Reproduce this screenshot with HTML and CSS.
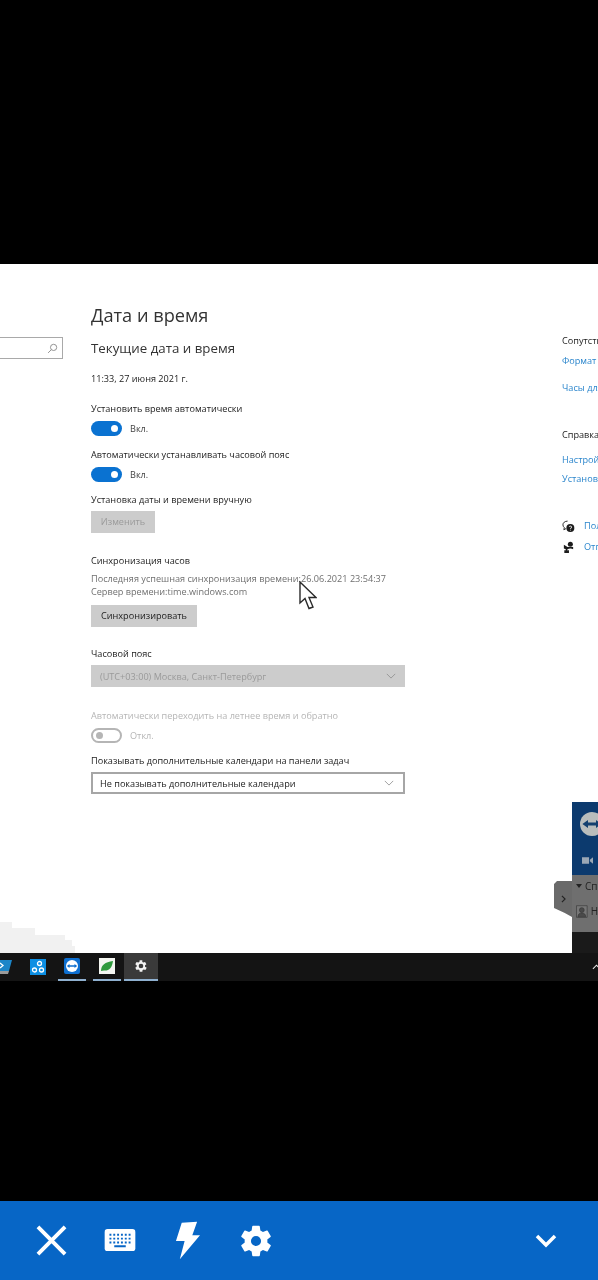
FILE: index.html
```html
<!DOCTYPE html>
<html lang="ru">
<head>
    <meta charset="UTF-8">
    <meta name="viewport" content="width=device-width, initial-scale=1.0">
    <title>Удалённый рабочий стол</title>
    <link rel="stylesheet" href="styles.css">
</head>
<body>
    <div class="remote">
        <div class="window">
            <div class="sidebar">
                <div class="search">
                    <svg class="search-icon" viewBox="0 0 12 12"><circle cx="7.2" cy="4.8" r="3.4"/><path d="M4.8 7.2 1.2 10.8"/></svg>
                </div>
                <svg class="smudge" viewBox="0 0 75 31"><path d="M0 0h12v6h23v7h30v5h7v6h3v7H0z"/></svg>
            </div>

            <div class="settings">
                <h1>Дата и время</h1>
                <h2>Текущие дата и время</h2>
                <p class="now">11:33, 27 июня 2021 г.</p>

                <p class="label first">Установить время автоматически</p>
                <div class="toggle-row">
                    <span class="toggle on"></span>
                    <span class="toggle-text">Вкл.</span>
                </div>

                <p class="label second">Автоматически устанавливать часовой пояс</p>
                <div class="toggle-row">
                    <span class="toggle on"></span>
                    <span class="toggle-text">Вкл.</span>
                </div>

                <p class="label third">Установка даты и времени вручную</p>
                <div class="btn disabled">Изменить</div>

                <p class="label sync">Синхронизация часов</p>
                <p class="info sync-last">Последняя успешная синхронизация времени:26.06.2021 23:54:37</p>
                <p class="info">Сервер времени:time.windows.com</p>
                <div class="btn sync-btn">Синхронизировать</div>

                <p class="label zone">Часовой пояс</p>
                <div class="select disabled">
                    <span>(UTC+03:00) Москва, Санкт-Петербург</span>
                    <svg class="chevron" viewBox="0 0 12 7"><path d="M1 1l5 5 5-5"/></svg>
                </div>

                <p class="label muted dst">Автоматически переходить на летнее время и обратно</p>
                <div class="toggle-row off-row">
                    <span class="toggle off"></span>
                    <span class="toggle-text">Откл.</span>
                </div>

                <p class="label calendars">Показывать дополнительные календари на панели задач</p>
                <div class="select">
                    <span>Не показывать дополнительные календари</span>
                    <svg class="chevron" viewBox="0 0 12 7"><path d="M1 1l5 5 5-5"/></svg>
                </div>
            </div>

            <div class="related">
                <p class="rel-title">Сопутствующие параметры</p>
                <a class="rel-link">Формат даты, времени и региона</a>
                <a class="rel-link gap">Часы для различных часовых поясов</a>
                <p class="rel-title help">Справка из Интернета</p>
                <a class="rel-link">Настройка синхронизации часов</a>
                <a class="rel-link tight">Установка часового пояса</a>
                <div class="rel-action first-action">
                    <svg viewBox="0 0 14 14"><path class="bubble" d="M6 1.2C3 1.2 1 3 1 5.2c0 1.200.6 2.200 1.500 3L2 10.500l2.400-1.300"/><circle cx="9" cy="8.500" r="4.300"/><path class="mark" d="M7.700 7.400c.3-1.200 2.700-1.100 2.700.2 0 1-1.300 1-1.300 2M9.100 10.500v.8"/></svg>
                    <a>Получить помощь</a>
                </div>
                <div class="rel-action">
                    <svg viewBox="0 0 14 14"><circle cx="9" cy="3.500" r="2.700"/><path d="M4.500 12.500c0-3 2-4.500 4.500-4.500s3 1 3 1V6.500H6L2 4v4l2 1zM2.500 13h5V10h-5z"/></svg>
                    <a>Отправить отзыв</a>
                </div>
            </div>

            <!-- окно TeamViewer поверх настроек -->
            <div class="tv-panel">
                <div class="tv-head">
                    <span class="tv-logo"><svg viewBox="0 0 30 30"><path d="M3 15l7-5v3h10v-3l7 5-7 5v-3H10v3z"/></svg></span>
                    <svg class="tv-camera" viewBox="0 0 14 10"><path d="M0 1h9v8H0zM10 4l4-3v8l-4-3z"/></svg>
                </div>
                <div class="tv-list">
                    <p class="tv-row"><i class="tv-arrow"></i>Сп</p>
                    <p class="tv-row contact"><svg class="tv-user" viewBox="0 0 12 13"><path d="M.5.5h11v12H.5z"/><circle cx="6" cy="5" r="2.500"/><path d="M2 12c0-3 2-4 4-4s4 1 4 4z"/></svg>Н</p>
                </div>
                <div class="tv-foot"></div>
            </div>
            <div class="tv-tab">
                <svg viewBox="0 0 6 10"><path d="M1 1l4 4-4 4"/></svg>
            </div>

            <!-- указатель мыши -->
            <svg class="pointer" viewBox="0 0 18 30"><path d="M1 1v21l5-4.500 4 10 4-1.500-4-9.500h7z"/></svg>
        </div>

        <div class="taskbar">
            <span class="task-icon cut"><svg viewBox="0 0 16 16"><path fill="#1c86c8" d="M0 1h16l-3 11H0z"/><path fill="#9a9a9a" d="M0 12h13l-1 3H0z"/><path fill="none" stroke="#fff" stroke-width="1.300" d="M4 4l3 2.500-3 2.500"/></svg></span>
            <span class="task-icon"><svg viewBox="0 0 16 16"><rect width="16" height="16" fill="#0d8fe3"/><g fill="none" stroke="#fff" stroke-width="1.300"><circle cx="9.500" cy="4.500" r="2"/><circle cx="4.500" cy="11" r="2"/><circle cx="11.500" cy="11" r="2"/></g></svg></span>
            <span class="task-icon open"><svg viewBox="0 0 16 16"><rect width="16" height="16" rx="2" fill="#0e6fd0"/><circle cx="8" cy="8" r="6" fill="#fff"/><path fill="#0e6fd0" d="M2.800 8l2.700-2v1.200h5V6l2.700 2-2.700 2V8.800h-5V10z"/></svg></span>
            <span class="task-icon open"><svg viewBox="0 0 16 16"><rect width="16" height="16" fill="#f4f6f1"/><path fill="#2f9a3d" d="M2 13c0-6 4-9 12-10-1 7-4 10-9 9.500z"/></svg></span>
            <span class="task-icon open active"><svg viewBox="0 0 24 24"><path fill="#f2f2f2" d="M19.400 13c0-.3.1-.6.1-1s0-.7-.1-1l2.100-1.600-2-3.500-2.500 1a7 7 0 0 0-1.700-1L15.400 3.300h-4l-.4 2.600a7 7 0 0 0-1.700 1l-2.500-1-2 3.500L6.900 11a7 7 0 0 0 0 2l-2.100 1.600 2 3.500 2.500-1a7 7 0 0 0 1.700 1l.4 2.600h4l.4-2.600a7 7 0 0 0 1.700-1l2.500 1 2-3.500zM13.400 15.500a3.500 3.500 0 1 1 0-7 3.500 3.500 0 0 1 0 7z" transform="translate(-1.400)"/></svg></span>
            <svg class="tray-arrow" viewBox="0 0 10 6"><path d="M1 5l4-4 4 4"/></svg>
        </div>
    </div>

    <div class="toolbar">
        <button class="tool close-tool"><svg viewBox="0 0 32 32"><path d="M2 2l28 28M30 2 2 30"/></svg></button>
        <button class="tool keyboard-tool"><svg viewBox="0 0 32 24"><rect width="32" height="23" rx="3" fill="#fff"/><path fill="#0766c6" d="M5 5h2v2H5zm4 0h2v2H9zm4 0h2v2h-2zm4 0h2v2h-2zm4 0h2v2h-2zm4 0h2v2h-2zM5 9h2v2H5zm4 0h2v2H9zm4 0h2v2h-2zm4 0h2v2h-2zm4 0h2v2h-2zm4 0h2v2h-2zM5 13h2v2H5zm4 0h2v2H9zm4 0h2v2h-2zm4 0h2v2h-2zm4 0h2v2h-2zm4 0h2v2h-2zM10 17h12v2H10z"/></svg></button>
        <button class="tool bolt-tool"><svg viewBox="0 0 26 39"><path fill="#fff" d="M7 1l16-1-5 14h8L5 39l5-19H1z"/></svg></button>
        <button class="tool gear-tool"><svg viewBox="0 0 24 24"><path fill="#fff" d="M19.140 12.940c.04-.3.060-.61.060-.94s-.02-.64-.07-.94l2.030-1.580a.5.500 0 0 0 .12-.61l-1.920-3.320a.5.500 0 0 0-.59-.22l-2.390.96a7 7 0 0 0-1.620-.94l-.36-2.540a.48.480 0 0 0-.48-.41h-3.840a.48.480 0 0 0-.47.41l-.36 2.540c-.59.24-1.130.57-1.620.94l-2.390-.96a.49.490 0 0 0-.59.22L2.740 8.870a.48.480 0 0 0 .12.61l2.030 1.580a7.500 7.500 0 0 0 0 1.880l-2.030 1.580a.5.500 0 0 0-.12.61l1.920 3.320c.12.22.37.29.59.22l2.390-.96c.5.380 1.030.7 1.620.94l.36 2.540c.05.240.24.410.48.410h3.840c.24 0 .44-.17.47-.41l.36-2.540a7 7 0 0 0 1.620-.94l2.390.96c.22.080.47 0 .59-.22l1.920-3.320a.48.480 0 0 0-.12-.61zM12 15.200a3.200 3.200 0 1 1 0-6.400 3.200 3.200 0 0 1 0 6.400z"/></svg></button>
        <button class="tool collapse-tool"><svg viewBox="0 0 22 14"><path d="M2 2l9 9 9-9"/></svg></button>
    </div>
</body>
</html>
```

FILE: styles.css
```css
* {
    margin: 0;
    padding: 0;
    box-sizing: border-box;
}

body {
    width: 598px;
    height: 1280px;
    background: #000;
    font-family: 'Open Sans', 'Noto Sans', sans-serif;
    overflow: hidden;
    display: flex;
    flex-direction: column;
}

/* Remote desktop picture */
.remote {
    margin-top: 264px;
    height: 717px;
    filter: blur(0.45px);
}

.window {
    position: relative;
    height: 689px;
    background: #fff;
    display: flex;
    overflow: hidden;
}

.sidebar {
    width: 91px;
    flex-shrink: 0;
    padding-top: 73px;
}

.search {
    width: 63px;
    height: 22px;
    border: 1px solid #a9a9a9;
    border-left: none;
    display: flex;
    justify-content: flex-end;
    align-items: center;
    padding-right: 4px;
}

.search-icon {
    width: 11px;
    height: 11px;
    fill: none;
    stroke: #8a8a8a;
    stroke-width: 1;
}

.smudge {
    position: absolute;
    left: 0;
    bottom: 0;
    width: 75px;
    height: 31px;
    fill: #f1f1f1;
}

.settings {
    width: 314px;
    flex-shrink: 0;
    color: #222;
}

h1 {
    font-size: 18.2px;
    font-weight: 400;
    line-height: 24px;
    margin-top: 39px;
    color: #333;
}

h2 {
    font-size: 13.3px;
    font-weight: 400;
    line-height: 18px;
    margin-top: 12px;
    color: #333;
}

.now {
    font-size: 9.15px;
    line-height: 14px;
    margin-top: 15px;
}

.label {
    font-size: 9.15px;
    line-height: 14px;
}

.label.first { margin-top: 16px; }
.label.second { margin-top: 12px; }
.label.third { margin-top: 11px; }
.label.sync { margin-top: 21px; }
.label.zone { margin-top: 20px; }
.label.dst { margin-top: 22px; }
.label.calendars { margin-top: 11px; }

.label.muted {
    color: #b5b5b5;
}

.toggle-row {
    display: flex;
    align-items: center;
    gap: 8px;
    height: 16px;
    margin-top: 4px;
}

.toggle {
    position: relative;
    width: 31px;
    height: 15px;
    border-radius: 8px;
    display: block;
}

.toggle::after {
    content: '';
    position: absolute;
    top: 4px;
    width: 7px;
    height: 7px;
    border-radius: 50%;
}

.toggle.on {
    background: #0a72d1;
}

.toggle.on::after {
    right: 4px;
    background: #fff;
}

.toggle.off {
    border: 2px solid #b5b5b5;
}

.toggle.off::after {
    top: 2px;
    left: 3px;
    background: #b5b5b5;
}

.toggle-text {
    font-size: 9.15px;
    color: #444;
}

.off-row .toggle-text {
    color: #b5b5b5;
}

.btn {
    width: 64px;
    height: 22px;
    margin-top: 4px;
    background: #cccccc;
    font-size: 9.15px;
    line-height: 22px;
    text-align: center;
    color: #222;
}

.btn.disabled {
    color: #9a9a9a;
}

.btn.sync-btn {
    width: 106px;
    margin-top: 7px;
}

.info {
    font-size: 9.15px;
    line-height: 13px;
    color: #6f6f6f;
}

.info.sync-last {
    margin-top: 4px;
}

.select {
    width: 314px;
    height: 22px;
    margin-top: 4px;
    padding: 0 9px 0 7px;
    display: flex;
    align-items: center;
    justify-content: space-between;
    font-size: 9.15px;
    color: #222;
    border: 2px solid #a6a6a6;
}

.select.disabled {
    padding: 0 9px;
    background: #cccccc;
    border: none;
    color: #9a9a9a;
}

.chevron {
    width: 10px;
    height: 6px;
    fill: none;
    stroke: #8f8f8f;
    stroke-width: 1;
}

/* Right column, cut off by the screen edge */
.related {
    margin-left: 157px;
    width: 36px;
    flex-shrink: 0;
    font-size: 9.15px;
    white-space: nowrap;
    color: #222;
    padding-top: 70px;
}

.related p,
.related a {
    display: block;
    line-height: 14px;
}

.rel-link {
    color: #2a85cc;
    margin-top: 6px;
}

.rel-link.gap { margin-top: 13px; }
.rel-link.tight { margin-top: 5px; }

.rel-title.help { margin-top: 33px; }
.rel-title.help + .rel-link { margin-top: 11px; }

.rel-action {
    display: flex;
    align-items: center;
    gap: 9px;
    height: 14px;
    margin-top: 7px;
    color: #2a85cc;
}

.rel-action.first-action { margin-top: 33px; }

.rel-action svg {
    width: 13px;
    height: 13px;
    flex-shrink: 0;
    fill: #1c1c1c;
}

.rel-action .bubble {
    fill: none;
    stroke: #1c1c1c;
    stroke-width: 1;
}

.rel-action .mark {
    fill: none;
    stroke: #fff;
    stroke-width: 1;
}

/* TeamViewer panel */
.tv-panel {
    position: absolute;
    left: 572px;
    top: 538px;
    width: 26px;
    height: 151px;
    display: flex;
    flex-direction: column;
    overflow: hidden;
}

.tv-head {
    height: 73px;
    background: #0c3a6e;
    padding: 10px 0 0 8px;
}

.tv-logo {
    display: block;
    width: 24px;
    height: 24px;
    border-radius: 50%;
    background: #b9bdbc;
}

.tv-logo svg {
    display: block;
    fill: #14406f;
}

.tv-camera {
    display: block;
    width: 11px;
    height: 9px;
    margin: 20px 0 0 2px;
    fill: #9aa7b5;
}

.tv-list {
    height: 57px;
    background: #6f6f6f;
    color: #222;
    font-size: 10px;
    padding: 3px 0 0 4px;
}

.tv-row {
    line-height: 16px;
    white-space: nowrap;
    display: flex;
    align-items: center;
    gap: 3px;
}

.tv-row.contact {
    margin-top: 9px;
}

.tv-arrow {
    width: 0;
    height: 0;
    border-left: 3px solid transparent;
    border-right: 3px solid transparent;
    border-top: 4px solid #222;
}

.tv-user {
    width: 12px;
    height: 13px;
    fill: #4a4a4a;
    stroke: #333;
    stroke-width: 0.6;
}

.tv-user path:first-child {
    fill: #777;
}

.tv-foot {
    flex: 1;
    background: #1a1a1a;
}

.tv-tab {
    position: absolute;
    left: 554px;
    top: 617px;
    width: 18px;
    height: 36px;
    background: #6a6a6a;
    clip-path: polygon(3px 0, 100% 0, 100% 100%, 60% 32px, 0 27px, 0 3px);
    display: flex;
    align-items: center;
    justify-content: center;
}

.tv-tab svg {
    width: 5px;
    height: 8px;
    fill: none;
    stroke: #222;
    stroke-width: 1.4;
}

.pointer {
    position: absolute;
    left: 299px;
    top: 317px;
    width: 18px;
    height: 30px;
    fill: #fff;
    stroke: #2a2a2a;
    stroke-width: 1.4;
}

/* Windows taskbar */
.taskbar {
    position: relative;
    height: 28px;
    background: #141414;
}

.task-icon {
    position: absolute;
    top: 0;
    width: 34px;
    height: 28px;
    display: flex;
    align-items: center;
    justify-content: center;
}

.task-icon svg {
    width: 16px;
    height: 16px;
}

.task-icon:nth-child(1) { left: -13px; }
.task-icon:nth-child(2) { left: 21px; }
.task-icon:nth-child(3) { left: 58px; width: 28px; }
.task-icon:nth-child(4) { left: 93px; width: 28px; }
.task-icon:nth-child(5) { left: 124px; }

.task-icon.open {
    border-bottom: 2px solid #8fb0cf;
}

.task-icon.active {
    background: #3a3a3a;
}

.tray-arrow {
    position: absolute;
    right: -3px;
    top: 11px;
    width: 9px;
    height: 6px;
    fill: none;
    stroke: #e8e8e8;
    stroke-width: 1.2;
}

/* Blue toolbar of the phone app */
.toolbar {
    margin-top: 220px;
    height: 79px;
    background: #0766c6;
    display: flex;
    align-items: center;
}

.tool {
    border: none;
    background: none;
    display: flex;
    align-items: center;
    justify-content: center;
}

.tool svg {
    display: block;
}

.close-tool {
    margin-left: 36px;
}

.close-tool svg {
    width: 31px;
    height: 31px;
    fill: none;
    stroke: #fff;
    stroke-width: 4;
}

.keyboard-tool {
    margin-left: 37px;
}

.keyboard-tool svg {
    width: 32px;
    height: 23px;
}

.bolt-tool {
    margin-left: 39px;
}

.bolt-tool svg {
    width: 25px;
    height: 39px;
}

.gear-tool {
    margin-left: 37px;
}

.gear-tool svg {
    width: 38px;
    height: 38px;
}

.collapse-tool {
    margin-left: 260px;
}

.collapse-tool svg {
    width: 22px;
    height: 14px;
    fill: none;
    stroke: #fff;
    stroke-width: 3.500;
}
```
